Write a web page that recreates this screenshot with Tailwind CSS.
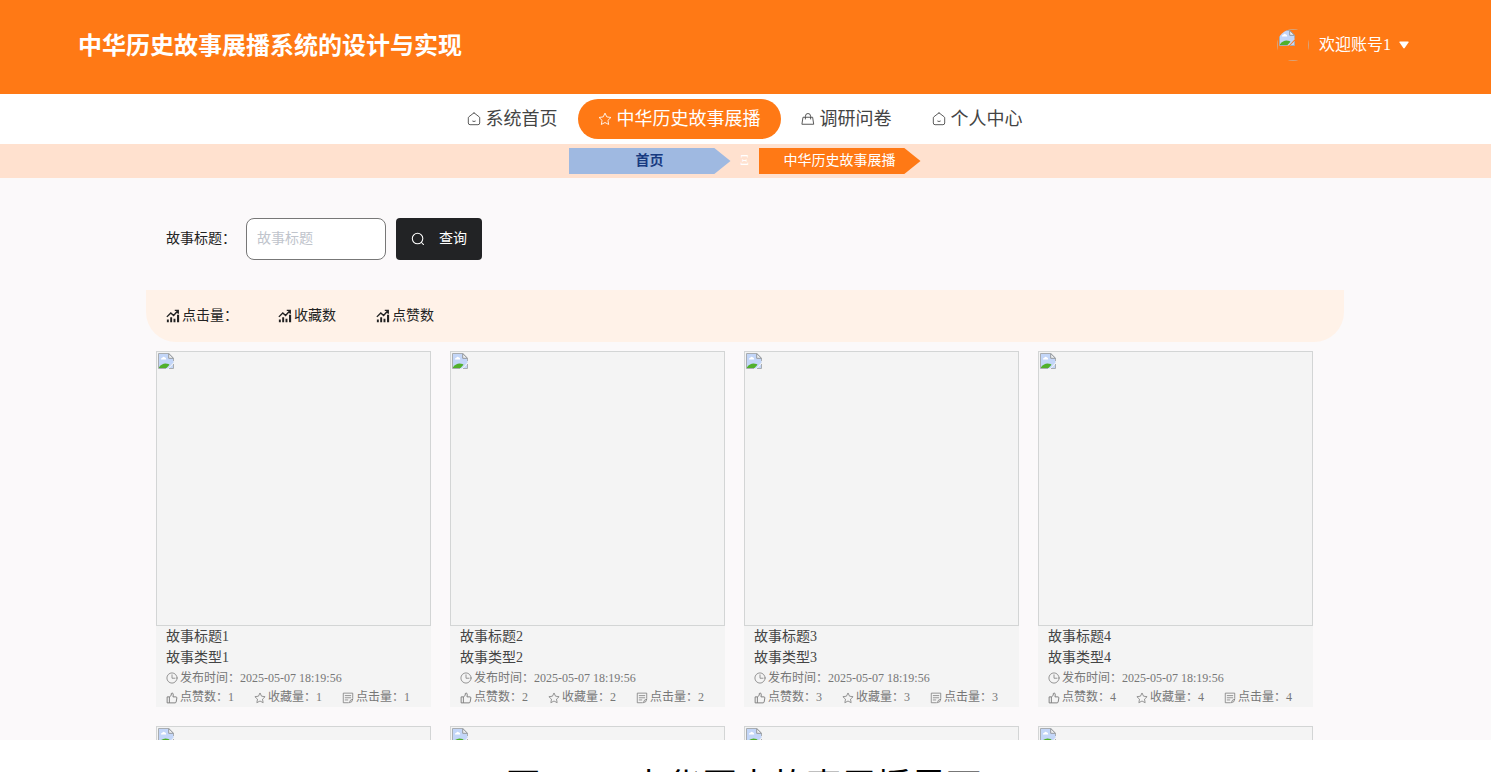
<!DOCTYPE html>
<html lang="zh-CN">
<head>
  <meta charset="UTF-8" />
  <meta name="viewport" content="width=device-width, initial-scale=1" />
  <title>中华历史故事展播系统的设计与实现</title>
  <script src="https://cdn.jsdelivr.net/npm/@tailwindcss/browser@4"></script>
</head>
<body class="h-screen overflow-hidden flex flex-col bg-white text-[#444] font-['Liberation_Serif','Noto_Sans_CJK_SC',serif]">

  <!-- shared icons -->
  <svg class="hidden">
    <symbol id="i-home" viewBox="0 0 16 16" fill="none" stroke="currentColor" stroke-linejoin="round" stroke-linecap="round">
      <path d="M8 1.2Q8.400 1.200 9 1.700L14 5.600Q14.500 6 14.500 7V12.500Q14.500 14.500 12.500 14.500H3.500Q1.500 14.500 1.500 12.500V7Q1.500 6 2 5.600L7 1.700Q7.600 1.200 8 1.200z" /><path d="M6.500 10.500q1.500 1 3 0" />
    </symbol>
    <symbol id="i-star" viewBox="0 0 16 16" fill="none" stroke="currentColor" stroke-linejoin="round">
      <path d="m8 1.300 2.050 4.300 4.750.650-3.450 3.300.850 4.700L8 12l-4.200 2.250.850-4.700L1.200 6.250l4.750-.650z" />
    </symbol>
    <symbol id="i-bag" viewBox="0 0 16 16" fill="none" stroke="currentColor" stroke-linejoin="round" stroke-linecap="round">
      <path d="M2.700 6h10.600l1.200 8h-13z" /><path d="M5 8V5a3 3.300 0 0 1 6 0v3" />
    </symbol>
    <symbol id="i-search" viewBox="0 0 16 16" fill="none" stroke="currentColor" stroke-linecap="round" stroke-width="1.2">
      <circle cx="7.5" cy="7.5" r="6" /><path d="m12 12 2.300 2.300" />
    </symbol>
    <symbol id="i-chart" viewBox="0 0 16 16" fill="currentColor">
      <path d="M1 12h2.200v3H1zM4.800 9.500h2.200V15H4.800zM8.600 11h2.200v4H8.600zM12.600 6.500h2.400v8.500h-2.400z" />
      <path d="m1 9 4.500-4.500 3.200 3L13.500 2M10 1.600h4v3.800" fill="none" stroke="currentColor" stroke-width="1.6" />
    </symbol>
    <symbol id="i-clock" viewBox="0 0 16 16" fill="none" stroke="currentColor" stroke-linecap="round">
      <circle cx="8" cy="8" r="6.8" /><path d="M8 3.800V8.300h4" />
    </symbol>
    <symbol id="i-thumb" viewBox="0 0 16 16" fill="none" stroke="currentColor" stroke-width="1.2" stroke-linejoin="round">
      <path d="M1.500 6.500h3v8h-3zM4.500 6.500 7 4.500V2q1.200-1.200 2.400 0 .6 1.500-.1 4.500h4q1.400.200 1.200 1.500l-1 5.300q-.3 1.200-1.500 1.200H4.500" />
    </symbol>
    <symbol id="i-note" viewBox="0 0 16 16" fill="none" stroke="currentColor" stroke-linecap="round" stroke-linejoin="round">
      <path d="M14.300 8V1.500H1.700v12.800h6.800" /><path d="M4.300 4.800h7.400M4.300 7.700h7.400M4.300 10.600h3.400M14.300 9.500q-4 .3-4.500 4.800 4.500-.3 4.500-4.800" />
    </symbol>
    <symbol id="i-broken" viewBox="0 0 16 16">
      <path d="M.5.5h10.200l4.800 4.800v4.200L10 15.500H.5z" fill="#c3d6f8" />
      <path d="M3 6.500q-.2-1.600 1.400-1.800.7-1.500 2.200-.5 1.800.2 1.600 2.300z" fill="#fff" />
      <path d="M1 15v-.8Q5 9 10.500 11l1 .8L8.500 15z" fill="#50b02c" />
      <path d="M15.500 8V5.300L10.700.5H.5v15h7.500" fill="none" stroke="#a9adb1" />
      <path d="M10.700.5v4.800h4.800z" fill="#eef0f2" stroke="#94989c" />
      <path d="M15.500 11v4.500H11z" fill="#c3d6f8" />
      <path d="M15.500 11v4.500H11" fill="none" stroke="#a9adb1" />
    </symbol>
  </svg>

  <main class="flex-1 min-h-0 overflow-hidden bg-[#fbf9fa]">

    <header class="flex items-center justify-between h-[94px] pb-1 pl-[78px] pr-[82px] bg-[#ff7915] text-white">
      <h1 class="pt-0.5 text-2xl font-bold">中华历史故事展播系统的设计与实现</h1>
      <button type="button" class="flex items-center gap-2.5 text-base">
        <svg class="size-8" viewBox="0 0 32 32">
          <clipPath id="round"><circle cx="16" cy="16" r="16" /></clipPath>
          <g clip-path="url(#round)">
            <use href="#i-broken" x="2" y="1" width="16" height="16" />
            <path d="M.5.5h31v31H.5z" fill="none" stroke="#d8a47c" />
          </g>
        </svg>
        <span class="flex items-center gap-2">欢迎账号1
          <svg class="w-2.5 h-2" viewBox="0 0 10 8" fill="currentColor"><path d="M1 .5h8q1 .2.5 1L5.700 7q-.7.8-1.400 0L.5 1.500Q0 .7 1 .5" /></svg>
        </span>
      </button>
    </header>

    <nav class="flex items-center justify-center h-[50px] pr-0.5 bg-white text-lg">
      <a href="#" class="flex items-center gap-[5px] h-10 px-5 rounded-full"><svg class="size-3.5"><use href="#i-home" /></svg>系统首页</a>
      <a href="#" class="flex items-center gap-[5px] h-10 px-5 rounded-full bg-[#ff7915] text-white"><svg class="size-3.5"><use href="#i-star" /></svg>中华历史故事展播</a>
      <a href="#" class="flex items-center gap-[5px] h-10 px-5 rounded-full"><svg class="size-3.5"><use href="#i-bag" /></svg>调研问卷</a>
      <a href="#" class="flex items-center gap-[5px] h-10 px-5 rounded-full"><svg class="size-3.5"><use href="#i-home" /></svg>个人中心</a>
    </nav>

    <div class="flex items-center justify-center gap-[9px] h-[34px] pr-0.5 bg-[#ffe1cf] text-sm">
      <a href="#" class="w-[162px] h-[26px] leading-[26px] text-center font-bold text-[#173a80] bg-[#9fb9e1] [clip-path:polygon(0_0,90%_0,100%_50%,90%_100%,0_100%)]">首页</a>
      <span class="w-2.5 text-center text-white">Ξ</span>
      <a href="#" class="w-[162px] h-[26px] leading-[26px] text-center text-white bg-[#ff7915] [clip-path:polygon(0_0,90%_0,100%_50%,90%_100%,0_100%)]">中华历史故事展播</a>
    </div>

    <div class="pr-px">
      <div class="w-full max-w-[1198px] mx-auto">
        <form id="searchForm" class="flex items-center h-[42px] mt-10 mb-[30px] pl-5 text-sm">
          <label for="storyTitle" class="w-20 text-[#222]">故事标题：</label>
          <input type="text" id="storyTitle" placeholder="故事标题"
                 class="w-[140px] h-[42px] px-2.5 bg-white border border-[#777] rounded-lg placeholder:text-[#c0c4cc] focus:outline-none" />
          <button type="submit" class="flex items-center gap-3.5 h-[42px] ml-2.5 px-[15px] rounded bg-[#222325] text-white">
            <svg class="size-3.5"><use href="#i-search" /></svg>查询
          </button>
        </form>

        <div class="flex items-center gap-10 h-[52px] px-5 rounded-b-[30px] bg-[#fff2e8] text-sm text-[#222]">
          <button type="button" class="flex items-center gap-0.5"><svg class="size-3.5"><use href="#i-chart" /></svg>点击量：</button>
          <button type="button" class="flex items-center gap-0.5"><svg class="size-3.5"><use href="#i-chart" /></svg>收藏数</button>
          <button type="button" class="flex items-center gap-0.5"><svg class="size-3.5"><use href="#i-chart" /></svg>点赞数</button>
        </div>

        <div id="stories" class="grid grid-cols-4 gap-[19px] mt-[9px] pl-[10px] pr-[31px]"></div>
      </div>
    </div>
  </main>

  <p class="h-8 shrink-0 overflow-hidden pt-7 pr-1 text-center text-[35px] leading-10 text-black whitespace-pre">图 5-12  中华历史故事展播界面</p>

  <script>
    const stories = document.getElementById("stories");

    const cover = `
      <div class="aspect-square p-px border border-[#d3d5d5] bg-[#f4f4f4]">
        <svg class="size-4"><use href="#i-broken" /></svg>
      </div>`;

    for (let i = 1; i <= 4; i++) {
      stories.insertAdjacentHTML("beforeend", `
        <a href="#" class="block bg-[#f4f4f4]">
          ${cover}
          <div class="px-2.5 text-sm leading-[21px]">
            <div>故事标题${i}</div>
            <div>故事类型${i}</div>
            <div class="flex items-center gap-0.5 text-xs leading-5 text-[#777]"><svg class="size-3"><use href="#i-clock" /></svg>发布时间：2025-05-07 18:19:56</div>
            <div class="flex gap-5 text-xs leading-[19px] text-[#777]">
              <span class="flex items-center gap-0.5"><svg class="size-3"><use href="#i-thumb" /></svg>点赞数：${i}</span>
              <span class="flex items-center gap-0.5"><svg class="size-3"><use href="#i-star" /></svg>收藏量：${i}</span>
              <span class="flex items-center gap-0.5"><svg class="size-3"><use href="#i-note" /></svg>点击量：${i}</span>
            </div>
          </div>
        </a>`);
    }

    for (let i = 5; i <= 8; i++) {
      stories.insertAdjacentHTML("beforeend", `<a href="#" class="block">${cover}</a>`);
    }

    document.getElementById("searchForm").addEventListener("submit", (e) => e.preventDefault());
  </script>

</body>
</html>
